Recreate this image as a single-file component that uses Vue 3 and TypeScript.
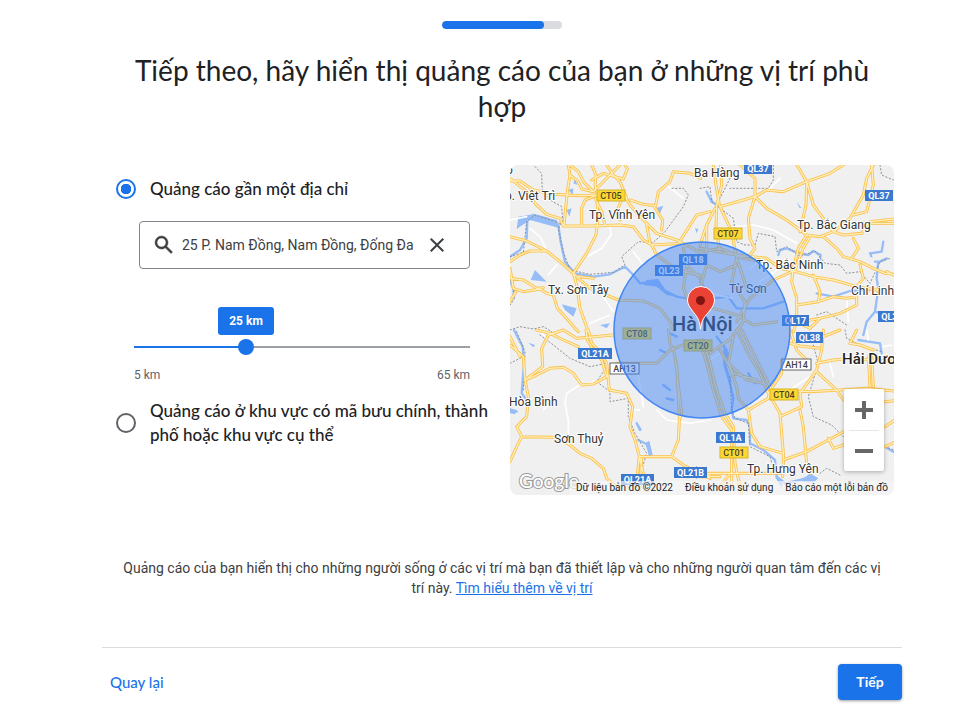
<script setup lang="ts">
import { computed, ref } from 'vue'

interface Tile {
  x: number
  y: number
  roads: string
  minor: string
  water: string
  lakes: string
  borders: string
}
interface Place {
  x: number
  y: number
  name: string
  kind?: string
}
interface Shield {
  x: number
  y: number
  w: number
  code: string
  kind: string
}

const MIN_KM = 5
const MAX_KM = 65
const target = ref('radius')
const address = ref('25 P. Nam Đồng, Nam Đồng, Đống Đa')
const radius = ref(25)
const percent = computed(() => ((radius.value - MIN_KM) / (MAX_KM - MIN_KM)) * 100 + '%')

// Map tiles are stored at triple resolution, each 570 by 495 units.
const tiles: Tile[] = [
  {
    x: 0,
    y: 0,
    roads:
      'M-5 48L30 48L70 75L130 88L210 92L262 90L345 95L360 120L400 165L440 205L500 225L570 262M0 40L50 80L75 115L110 148L150 160L160 183L250 183L330 180L370 185L400 225L425 240L500 236M175 0L180 30L172 80L165 150L162 180M180 30L205 50L215 72L250 80M180 0L205 20L222 52L250 80M245 0L258 30L255 60L262 90M330 0L300 30L270 60L250 80M290 0L310 30L330 50L350 100M245 45L280 25L340 42L352 12L345 0M262 90L225 105L215 130L215 180M255 100L275 140L285 180M262 90L262 180L258 210L230 265L190 325M335 105L320 140L330 165M360 105L400 118L437 122L445 80L480 50L490 20L540 25L572 40M0 215L50 228L110 258L150 290L190 325L205 340L240 370L325 405M0 290L30 270L60 258L110 258M0 310L10 370L40 380L90 372L110 385L130 390L142 430L165 455L205 500M0 340L40 345L80 370L100 368M0 410L18 380M190 325L200 360L210 430L235 500M425 240L440 270L480 300L520 320L570 330M410 180L420 235M505 235L560 150L600 140M455 195L458 165L430 120M325 405L400 408L450 430L480 470L490 495M520 250L530 300L520 370L540 420M530 300L570 340M250 340L205 335M590 180L590 300L570 370',
    minor:
      'M0 165L50 155M60 190L90 215L110 255M300 180L303 210L275 250L235 273M270 380L310 440M240 475L300 450M370 260L400 300M470 60L520 100M115 330L140 300',
    water:
      'M0 275L30 255L50 220L52 165L70 150L110 160L145 180L152 230L165 290L195 325L250 335L300 328L345 305L370 330L390 355L440 348L460 375L500 395L530 400M0 345L10 370L12 400',
    lakes:
      'M75 315L110 350L62 345zM155 418L200 430L190 455L165 435zM175 75L190 70L188 90zM170 135L185 130L178 155zM435 130L460 122L450 145zM555 190L565 192L560 205zM25 155L70 148L140 165L150 190L60 165L20 192zM410 345L445 342L470 380L510 395L470 390L440 365L400 360zM270 480L300 475L290 490zM195 40L202 60L190 55z',
    borders:
      'M75 5L95 25L97 80L120 105L155 125L158 165L145 190L160 260L180 315L240 328L310 322L345 300L335 275L385 230L430 232L465 200L520 125L535 90L520 70L480 70M0 275L40 262L50 170L75 150L150 175M0 345L12 375L8 410L0 420M0 495L30 485L70 492L100 485L125 500',
  },
  {
    x: 570,
    y: 0,
    roads:
      'M62 0L65 60L50 120L48 190L60 260M40 0L48 60L58 120L95 200L110 280L140 370M45 130L20 180L0 240M165 95L200 75L250 80L320 50L300 15L290 0M320 50L390 25L430 0M165 95L165 40L120 0M165 95L130 105L60 125M165 95L200 130L260 165L320 210L360 215L400 200L450 160L490 90L500 40L520 0M460 150L500 140L520 60L515 0M165 95L145 160L150 220L165 250L150 270M320 50L318 120L300 200M320 50L340 120L370 160L400 200M320 210L295 250L280 310L275 350L290 400L290 470L280 500M330 215L310 250L285 315M400 200L430 210L485 205L510 170L600 160M490 175L600 175M370 215L410 250L430 275L480 290L520 310L555 325L600 330M0 250L60 262L110 270L200 280L240 310L280 318M0 262L60 250L130 280L190 290M280 318L220 345L150 400L110 470M280 318L340 335L400 345L470 365L560 380M340 330L360 380L355 410L290 420M355 410L400 395L440 400L470 395L470 420L420 445L360 460L280 475M110 280L100 330L95 350L135 410L130 470L100 510M0 400L40 430L110 450L160 480L230 470M480 300L490 340L470 365M460 220L475 250L455 280M0 260L20 300L60 320L110 300M290 470L330 490L360 460M560 320L580 330',
    minor:
      'M100 185L160 180L220 195L290 235M180 350L240 310M240 40L210 70M440 400L445 470M0 360L50 390L100 400M190 280L150 310',
    water:
      'M235 270L240 255L260 250L290 262L325 270L340 258L362 270L358 290M350 385L400 395L450 378L510 375M510 265L545 260M525 290L535 290L530 340L535 370L525 440L500 470L490 510M0 350L40 400L85 395L110 430L190 430L250 410M545 260L550 230M540 290L560 280M525 440L560 450M20 80L35 110L60 125',
    lakes: 'M290 110L305 130L298 128zM508 262L514 262L518 278L510 275zM35 95L42 115L30 112z',
    borders:
      'M0 70L30 65L35 110L100 160L110 230L135 240L165 240L175 205L225 215L230 260L260 245L300 275L345 258L375 295L420 300L440 325L480 320L510 355L540 290L570 280M100 20L60 100M220 0L220 45L205 70L130 70L90 70M540 0L545 30L580 45M350 450L380 440L440 480',
  },
  {
    x: 0,
    y: 495,
    roads:
      'M0 45L40 80L45 150L55 200L50 260L20 290L35 320L20 350L0 395M160 0L115 15L95 55L98 110L45 150L70 140L120 115L160 112L190 130L215 165L250 162L290 140M80 0L120 10L160 30L205 50M160 0L200 25L310 15M235 0L245 40L265 60L290 100L298 180L350 190L368 230L360 290L375 330L388 380L485 380L505 330L508 270L515 250L495 80L490 60M228 0L232 30L250 60L275 90L290 140M485 380L520 405L600 445M388 380L378 470M388 380L412 480M395 380L390 480M35 320L130 322L180 345L210 370L245 385L280 415L290 445L320 470M320 100L440 100L480 60L530 40L570 30M475 0L480 40L490 60M508 260L500 100M0 20L30 80M530 440L600 435',
    minor:
      'M270 150L210 165L170 190L165 220L175 270L175 310M440 240L470 270L540 280L600 270M370 240L390 240M90 0L105 20M100 240L120 220M380 110L400 230',
    water: 'M12 0L38 50L42 100L35 190L50 210M0 240L20 245M380 280L390 300M385 330L415 345L420 380M460 165L480 180M470 205L490 210M450 60L470 70M480 10L500 20',
    lakes: 'M0 235L20 240L15 253L0 250zM380 275L397 300L385 298zM405 340L418 332L428 375L418 378zM55 38L75 45L70 52z',
    borders:
      'M20 5L45 65L40 180M90 15L130 45L180 85L240 110L290 100M290 110L260 155L300 185L300 215L355 205L355 260L375 310L410 370L395 420L400 450M0 100L40 80M560 410L575 430L560 445',
  },
  {
    x: 570,
    y: 495,
    roads:
      'M0 40L20 100L40 180L65 260L95 300L95 470M10 30L30 100L50 180L75 250L100 290L105 400L125 490M100 20L85 100L110 170L115 205L145 240L155 310L180 350L250 370L250 395L248 440M100 20L30 70M110 0L150 80L180 130L205 190L240 250L250 370M125 0L165 80L190 130L215 180M205 190L245 130L245 90M145 240L205 205L210 180L330 185L420 180L500 175L600 185M370 0L365 60L350 120L300 190L305 230L240 260M350 125L410 180L430 210M350 100L400 90L450 85L510 90L600 95M505 80L510 170M515 80L520 170M300 240L310 290L320 400L330 430M250 390L320 365L385 330L440 300M385 325L400 355L430 345M555 290L600 260M555 350L600 330M0 430L80 430L240 430M0 440L60 440M270 40L300 48L360 55M370 20L420 0M470 0L450 40L480 45L520 60M85 100L140 150L190 160M270 0L290 60L320 90M90 430L60 470M60 60L100 130L170 150M555 215L600 210',
    minor: 'M270 180L330 140M60 70L30 90M390 100L400 140M500 0L505 30M230 430L290 410M550 50L575 45',
    water: 'M50 20L80 60L75 110L90 160L100 205L95 240L100 265L140 270L150 290L150 340L190 360L225 390L230 440L255 460L300 450L335 438M145 130L165 160M475 30L540 40L545 70M545 345L580 365',
    lakes: 'M70 50L88 70L78 100L96 160L84 140L70 105zM225 440L250 450L245 475zM300 455L330 430L355 445L340 458z',
    borders:
      'M90 140L95 240L105 265L145 280L150 350L210 380L225 430M340 45L355 100L325 200L340 260L395 285L430 320M435 0L440 25L480 45L545 65M360 430L380 415L420 435M545 345L580 360',
  },
]

const places: Place[] = [
  { x: -5, y: 35, name: 'p. Việt Trì' },
  { x: 79, y: 54, name: 'Tp. Vĩnh Yên' },
  { x: 184, y: 12, name: 'Ba Hàng' },
  { x: 287, y: 64, name: 'Tp. Bắc Giang' },
  { x: 246, y: 104, name: 'Tp. Bắc Ninh' },
  { x: 219, y: 128, name: 'Từ Sơn' },
  { x: 341, y: 130, name: 'Chí Linh' },
  { x: 38, y: 129, name: 'Tx. Sơn Tây' },
  { x: -1, y: 241, name: 'Hòa Bình' },
  { x: 44, y: 278, name: 'Sơn Thuỷ' },
  { x: 237, y: 308, name: 'Tp. Hưng Yên' },
  { x: -4, y: 9, name: 'ọ' },
  { x: 332, y: 199, name: 'Hải Dương', kind: 'large' },
  { x: 162, y: 166, name: 'Hà Nội', kind: 'capital' },
]

const shields: Shield[] = [
  { x: 87, y: 25, w: 28, code: 'CT05', kind: 'toll' },
  { x: 204, y: 63, w: 28, code: 'CT07', kind: 'toll' },
  { x: 113, y: 163, w: 28, code: 'CT08', kind: 'toll' },
  { x: 174, y: 175, w: 28, code: 'CT20', kind: 'toll' },
  { x: 260, y: 224, w: 28, code: 'CT04', kind: 'toll' },
  { x: 210, y: 282, w: 28, code: 'CT01', kind: 'toll' },
  { x: 234, y: -2, w: 28, code: 'QL37', kind: 'national' },
  { x: 355, y: 25, w: 28, code: 'QL37', kind: 'national' },
  { x: 169, y: 89, w: 28, code: 'QL18', kind: 'national' },
  { x: 145, y: 100, w: 28, code: 'QL23', kind: 'national' },
  { x: 272, y: 150, w: 27, code: 'QL17', kind: 'national' },
  { x: 286, y: 167, w: 27, code: 'QL38', kind: 'national' },
  { x: 368, y: 146, w: 28, code: 'QL37', kind: 'national' },
  { x: 68, y: 183, w: 34, code: 'QL21A', kind: 'national' },
  { x: 206, y: 267, w: 29, code: 'QL1A', kind: 'national' },
  { x: 164, y: 302, w: 33, code: 'QL21B', kind: 'national' },
  { x: 111, y: 309, w: 33, code: 'QL21A', kind: 'national' },
  { x: 100, y: 198, w: 29, code: 'AH13', kind: 'asian' },
  { x: 272, y: 194, w: 29, code: 'AH14', kind: 'asian' },
]
</script>

<template>
  <main class="page">
    <div class="content">
      <div class="progress" role="progressbar" aria-label="Tiến trình" aria-valuenow="85" aria-valuemin="0" aria-valuemax="100">
        <div class="progress-fill"></div>
      </div>
      <h1>Tiếp theo, hãy hiển thị quảng cáo của bạn ở những vị trí phù hợp</h1>

      <div class="columns">
        <form class="options" @submit.prevent>
          <label class="option">
            <input v-model="target" type="radio" name="target" value="radius" />
            <span>Quảng cáo gần một địa chỉ</span>
          </label>

          <div class="search">
            <svg class="search-icon" viewBox="0 0 24 24" aria-hidden="true">
              <path d="M20.49 19l-5.73-5.73C15.53 12.2 16 10.91 16 9.5A6.5 6.5 0 1 0 9.5 16c1.41 0 2.7-.47 3.77-1.24L19 20.49 20.49 19zM5 9.5C5 7.01 7.01 5 9.5 5S14 7.01 14 9.5 11.99 14 9.5 14 5 11.99 5 9.5z" />
            </svg>
            <input v-model="address" class="address" type="text" aria-label="Địa chỉ" />
            <button class="clear" type="button" aria-label="Xóa" @click="address = ''">
              <svg viewBox="0 0 24 24" aria-hidden="true">
                <path d="M19 6.41L17.59 5 12 10.59 6.41 5 5 6.41 10.59 12 5 17.59 6.41 19 12 13.41 17.59 19 19 17.59 13.41 12z" />
              </svg>
            </button>
          </div>

          <div class="slider">
            <div class="bubble-row">
              <output class="bubble" :style="{ left: percent }">{{ radius }} km</output>
            </div>
            <div class="rail">
              <div class="rail-fill" :style="{ width: percent }"></div>
              <input v-model.number="radius" class="range" type="range" :min="MIN_KM" :max="MAX_KM" aria-label="Bán kính" />
            </div>
            <div class="limits">
              <span>{{ MIN_KM }} km</span>
              <span>{{ MAX_KM }} km</span>
            </div>
          </div>

          <label class="option">
            <input v-model="target" type="radio" name="target" value="area" />
            <span>Quảng cáo ở khu vực có mã bưu chính, thành phố hoặc khu vực cụ thể</span>
          </label>
        </form>

        <section class="map" aria-label="Bản đồ">
          <svg class="map-canvas" viewBox="0 0 384 330" preserveAspectRatio="xMidYMid slice">
            <rect width="384" height="330" fill="#f0f0f0" />
            <g transform="scale(0.33333)" fill="none" stroke-linejoin="round" stroke-linecap="round">
              <g v-for="t in tiles" :key="'b' + t.x + t.y" :transform="`translate(${t.x} ${t.y})`">
                <path :d="t.lakes" fill="#96bdf8" />
                <path :d="t.water" stroke="#96bdf8" stroke-width="7" />
                <path :d="t.minor" stroke="#fff" stroke-width="5" />
                <path :d="t.borders" stroke="#8b909a" stroke-width="3" stroke-dasharray="4 7" />
              </g>
              <g v-for="t in tiles" :key="'c' + t.x + t.y" :transform="`translate(${t.x} ${t.y})`">
                <path :d="t.roads" stroke="#fbc04a" stroke-width="9" />
              </g>
              <g v-for="t in tiles" :key="'r' + t.x + t.y" :transform="`translate(${t.x} ${t.y})`">
                <path :d="t.roads" stroke="#ffeeb8" stroke-width="4" />
              </g>
            </g>
            <g v-for="(s, i) in shields" :key="i" :class="['shield', s.kind]">
              <rect :x="s.x" :y="s.y" :width="s.w" height="11" />
              <text :x="s.x + s.w / 2" :y="s.y + 9" text-anchor="middle">{{ s.code }}</text>
            </g>
            <text v-for="p in places" :key="p.name" :x="p.x" :y="p.y" :class="['place', p.kind]">{{ p.name }}</text>
            <circle cx="192" cy="165" r="88" fill="#4285f4" fill-opacity="0.5" stroke="#4285f4" stroke-width="1.5" />
            <path d="M190.500 164c-1-10-4-13-8-18-3-4-5-7-5-11a13.500 13.500 0 0 1 27 0c0 4-2 7-5 11-4 5-8 8-9 18z" fill="#ea4335" stroke="#fff" stroke-width="1" />
            <circle cx="190.500" cy="135.500" r="4.500" fill="#811411" />
            <text class="logo" x="9" y="323">Google</text>
          </svg>
          <div class="zoom">
            <button type="button" aria-label="Phóng to">
              <svg viewBox="0 0 18 18" aria-hidden="true"><path d="M7 0h4v7h7v4h-7v7H7v-7H0V7h7z" /></svg>
            </button>
            <button type="button" aria-label="Thu nhỏ">
              <svg viewBox="0 0 18 18" aria-hidden="true"><path d="M0 7h18v4H0z" /></svg>
            </button>
          </div>
          <div class="credits">
            <span>Dữ liệu bản đồ ©2022</span>
            <a href="#terms">Điều khoản sử dụng</a>
            <a href="#report">Báo cáo một lỗi bản đồ</a>
          </div>
        </section>
      </div>

      <p class="note">
        Quảng cáo của bạn hiển thị cho những người sống ở các vị trí mà bạn đã thiết lập và cho những người quan tâm đến các vị trí này.
        <a href="#more">Tìm hiểu thêm về vị trí</a>
      </p>

      <footer class="actions">
        <button class="back" type="button">Quay lại</button>
        <button class="next" type="button">Tiếp</button>
      </footer>
    </div>
  </main>
</template>

<style>
body {
  background: #fff;
}
</style>

<style scoped>
.page {
  padding: 21px 0 21px 28px;
  font-family: Roboto, 'Noto Sans', sans-serif;
  color: #3c4043;
}
.content {
  max-width: 800px;
  margin: 0 auto;
}
.progress {
  width: 120px;
  height: 8px;
  margin: 0 auto;
  border-radius: 4px;
  background: #dadce0;
  overflow: hidden;
}
.progress-fill {
  width: 85%;
  height: 100%;
  border-radius: 4px;
  background: #1a73e8;
}
h1 {
  margin: 23px 16px 0;
  font: 400 28px/36px Lato, 'Open Sans', sans-serif;
  text-align: center;
  color: #202124;
}
.columns {
  display: grid;
  grid-template-columns: minmax(0, 1fr) minmax(0, 384px);
  gap: 20px;
  margin-top: 41px;
  padding-right: 8px;
  align-items: start;
}
.options {
  padding: 12px 0 0 14px;
}
.option {
  display: flex;
  align-items: center;
  gap: 14px;
  font: 500 17px/24px Lato, 'Open Sans', sans-serif;
  color: #202124;
}
.option input {
  appearance: none;
  flex: none;
  box-sizing: border-box;
  width: 20px;
  height: 20px;
  margin: 0;
  border: 2px solid #5f6368;
  border-radius: 50%;
}
.option input:checked {
  border-color: #1a73e8;
  background: radial-gradient(circle, #1a73e8 5px, transparent 5.5px);
}
.search {
  display: flex;
  align-items: center;
  height: 46px;
  margin: 20px 20px 0 23px;
  padding: 0 20px 0 12px;
  border: 1px solid #80868b;
  border-radius: 4px;
}
.search-icon {
  flex: none;
  width: 24px;
  height: 24px;
  fill: #3c4043;
  stroke: #3c4043;
  stroke-width: 0.5px;
}
.address {
  flex: 1;
  min-width: 0;
  margin-left: 6px;
  padding: 0;
  border: 0;
  outline: 0;
  font: 400 14px/20px Roboto, sans-serif;
  color: #3c4043;
}
.clear {
  flex: none;
  width: 24px;
  height: 24px;
  padding: 0;
  border: 0;
  background: none;
}
.clear svg {
  display: block;
  width: 24px;
  height: 24px;
  fill: #3c4043;
}
.slider {
  margin: 38px 20px 0 18px;
}
.bubble-row {
  position: relative;
  height: 28px;
}
.bubble {
  position: absolute;
  width: 56px;
  height: 28px;
  transform: translateX(-50%);
  border-radius: 3px;
  background: #1a73e8;
  font: 700 12px/28px Roboto, sans-serif;
  text-align: center;
  color: #fff;
}
.rail {
  position: relative;
  height: 2px;
  margin-top: 11px;
  background: #9aa0a6;
}
.rail-fill {
  height: 2px;
  background: #1a73e8;
}
.range {
  appearance: none;
  position: absolute;
  top: -7px;
  left: -8px;
  width: calc(100% + 16px);
  height: 16px;
  margin: 0;
  background: none;
}
.range::-webkit-slider-thumb {
  appearance: none;
  width: 16px;
  height: 16px;
  border-radius: 50%;
  background: #1a73e8;
}
.limits {
  display: flex;
  justify-content: space-between;
  margin: 19px 0 16px;
  font-size: 12px;
  line-height: 16px;
  color: #5f6368;
}
.map {
  position: relative;
  border-radius: 8px;
  overflow: hidden;
}
.map-canvas {
  display: block;
  width: 100%;
}
.place {
  font: 400 12px Roboto, sans-serif;
  fill: #333;
  stroke: #fff;
  stroke-width: 2px;
  stroke-linejoin: round;
  paint-order: stroke;
}
.place.large {
  font-size: 15px;
  font-weight: 500;
  fill: #222;
}
.place.capital {
  font-size: 20px;
  font-weight: 500;
  fill: #222;
  stroke: none;
}
.shield text {
  font: 500 9px Roboto, sans-serif;
}
.national rect {
  fill: #3b78cf;
}
.national text {
  fill: #fff;
  font-weight: 700;
}
.toll rect {
  fill: #fdd835;
  stroke: #d5b42d;
}
.toll text {
  fill: #4a4320;
}
.asian rect {
  fill: #fff;
  stroke: #666;
}
.asian text {
  fill: #444;
}
.logo {
  font: 500 19px Lato, 'Open Sans', sans-serif;
  fill: #fff;
  stroke: #999;
  stroke-width: 2px;
  paint-order: stroke;
}
.zoom {
  position: absolute;
  right: 10px;
  bottom: 24px;
  width: 40px;
  border-radius: 2px;
  background: #fff;
  box-shadow: 0 1px 4px rgba(0, 0, 0, 0.3);
}
.zoom button {
  display: flex;
  align-items: center;
  justify-content: center;
  width: 30px;
  height: 41px;
  margin: 0 auto;
  padding: 0;
  border: 0;
  background: none;
}
.zoom button + button {
  border-top: 1px solid #e6e6e6;
}
.zoom svg {
  width: 18px;
  height: 18px;
  fill: #666;
}
.credits {
  position: absolute;
  right: 0;
  bottom: 0;
  display: flex;
  gap: 12px;
  padding: 0 6px;
  background: rgba(245, 245, 245, 0.7);
  font-size: 10px;
  line-height: 14px;
  white-space: nowrap;
}
.credits span,
.credits a {
  color: #222;
  text-decoration: none;
}
.note {
  margin: 63px 16px 0;
  font-size: 14px;
  line-height: 20px;
  text-align: center;
}
.note a {
  color: #1a73e8;
  text-decoration: underline;
}
.actions {
  display: flex;
  align-items: center;
  justify-content: space-between;
  margin-top: 49px;
  padding-top: 16px;
  border-top: 1px solid #dadce0;
}
.actions button {
  height: 36px;
  border: 0;
  border-radius: 4px;
  font: 500 15px/20px Lato, 'Open Sans', sans-serif;
}
.back {
  padding: 0 8px;
  background: none;
  color: #1a73e8;
}
.actions .next {
  width: 64px;
  padding: 0;
  background: #1a73e8;
  box-shadow: 0 1px 3px rgba(60, 64, 67, 0.5);
  font-size: 14px;
  font-weight: 700;
  color: #fff;
}
</style>
